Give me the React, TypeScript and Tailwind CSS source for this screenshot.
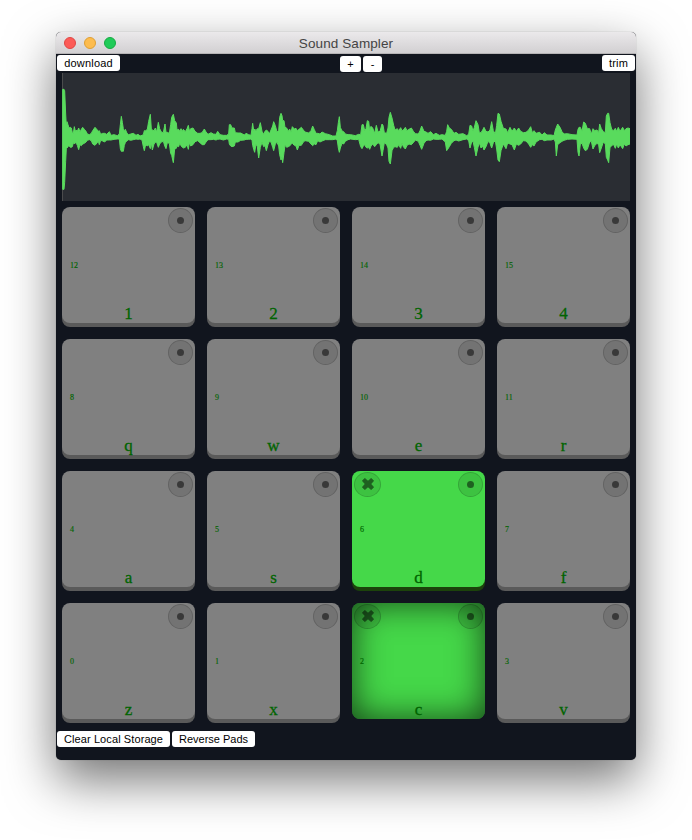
import React from "react";

type Sample = [number, number, number];

// Each sample holds x, peak above the axis and peak below it, in thirds of a pixel.
const SAMPLES: Sample[] = [
  [2,144,156],[6,144,156],[8,140,135],[11,70,72],[13,34,33],[15,47,32],[18,38,28],[21,28,25],[25,30,30],[28,28,30],[31,14,28],[34,12,16],[37,32,20],[40,18,16],[43,22,18],[46,18,24],[50,28,37],[54,16,22],[58,24,25],[62,30,20],[67,24,18],[72,18,14],[76,10,9],[82,8,7],[88,12,10],[92,20,20],[99,30,24],[106,22,16],[109,18,12],[112,20,22],[116,9,9],[122,12,11],[128,12,14],[134,9,8],[142,17,8],[147,6,8],[156,8,6],[166,5,5],[172,10,5],[175,38,34],[178,63,42],[181,45,42],[184,26,42],[187,18,24],[190,24,16],[195,12,10],[200,8,7],[206,10,9],[214,12,7],[222,6,5],[228,9,6],[234,4,5],[240,6,8],[244,8,28],[247,20,40],[251,20,22],[256,24,26],[260,48,22],[265,69,34],[268,25,16],[271,22,38],[276,20,20],[280,28,15],[284,16,15],[289,45,30],[293,26,20],[298,16,14],[304,14,12],[309,40,28],[312,15,34],[316,15,16],[322,12,18],[326,38,48],[329,60,54],[334,69,76],[338,50,35],[343,43,33],[345,22,26],[350,24,28],[353,18,18],[357,26,25],[361,18,30],[364,24,32],[370,17,30],[375,26,22],[379,36,36],[382,20,16],[386,26,26],[393,28,22],[399,18,13],[407,12,10],[414,12,16],[420,14,22],[427,25,22],[432,16,14],[438,9,7],[447,14,7],[454,10,6],[462,9,8],[467,18,6],[474,8,5],[484,6,8],[494,6,5],[500,10,6],[502,38,20],[506,38,26],[510,28,28],[517,28,26],[520,14,14],[528,13,14],[536,13,9],[547,7,8],[552,12,6],[560,8,6],[567,6,5],[570,26,8],[572,42,24],[575,20,36],[578,25,45],[582,20,20],[586,26,28],[590,26,62],[595,44,30],[600,18,15],[605,9,28],[609,18,25],[613,22,40],[618,18,22],[622,10,12],[627,22,14],[632,34,30],[635,47,40],[640,35,20],[645,16,15],[650,20,26],[653,60,52],[657,72,68],[660,65,60],[662,50,76],[666,50,46],[669,30,24],[674,28,30],[679,18,28],[683,25,26],[687,15,20],[691,32,18],[697,25,24],[702,27,26],[706,20,38],[711,24,24],[718,30,24],[724,22,14],[729,16,10],[740,13,12],[747,20,20],[752,34,25],[757,23,20],[762,12,22],[767,12,10],[774,10,14],[780,16,11],[790,11,7],[802,8,7],[812,4,7],[822,4,5],[826,20,10],[829,44,32],[832,62,45],[835,30,32],[840,19,18],[845,17,20],[850,10,12],[858,8,7],[866,8,5],[880,5,7],[890,9,6],[896,8,28],[900,38,34],[904,38,26],[908,20,22],[912,26,30],[916,50,32],[920,48,30],[923,20,36],[927,33,26],[932,28,20],[938,12,28],[943,36,22],[948,16,16],[954,18,20],[960,40,56],[963,36,40],[967,14,16],[974,12,22],[978,28,32],[981,60,72],[985,75,80],[990,58,40],[995,36,30],[999,22,28],[1006,26,30],[1010,20,22],[1016,29,33],[1020,20,18],[1024,22,28],[1030,30,35],[1035,20,24],[1041,24,20],[1048,28,22],[1054,18,16],[1060,11,8],[1069,10,12],[1074,20,24],[1079,34,36],[1086,18,18],[1092,16,10],[1098,12,8],[1106,17,9],[1114,8,5],[1122,12,6],[1132,6,6],[1140,8,5],[1150,6,14],[1154,18,40],[1157,38,36],[1162,28,28],[1168,24,18],[1176,12,10],[1182,15,8],[1190,9,11],[1203,11,7],[1214,5,5],[1220,9,10],[1224,36,32],[1229,34,14],[1233,18,12],[1237,30,30],[1242,50,56],[1248,38,30],[1252,14,16],[1257,14,32],[1262,22,26],[1266,30,38],[1272,18,28],[1278,16,12],[1284,22,18],[1289,47,32],[1294,20,16],[1300,10,10],[1304,36,35],[1308,72,68],[1312,70,73],[1317,48,40],[1324,27,20],[1332,25,34],[1337,14,17],[1344,30,20],[1350,18,22],[1357,28,38],[1363,18,20],[1370,28,24],[1376,18,20],[1384,14,10],[1392,15,11],[1400,22,20],[1406,32,30],[1411,14,22],[1416,20,26],[1422,12,14],[1433,15,7],[1440,7,6],[1447,14,10],[1455,7,8],[1468,7,8],[1476,5,5],[1480,22,14],[1483,30,56],[1487,40,22],[1494,30,16],[1500,17,12],[1506,10,9],[1516,11,6],[1530,8,5],[1545,7,6],[1548,24,45],[1551,30,56],[1555,30,20],[1560,18,18],[1565,46,32],[1570,42,40],[1576,26,36],[1583,26,14],[1588,10,12],[1593,26,35],[1598,20,25],[1605,22,18],[1610,14,22],[1613,40,46],[1618,26,32],[1624,17,14],[1630,14,20],[1633,64,60],[1637,72,68],[1640,72,76],[1644,44,30],[1649,24,26],[1654,20,20],[1660,27,33],[1664,18,20],[1669,30,32],[1674,18,22],[1682,30,34],[1687,20,20],[1692,26,26],[1698,28,22],[1704,26,20],
];

const WAVE =
  SAMPLES.map(([x, up], i) => `${i ? "L" : "M"}${x} ${192 - up}`).join("") +
  [...SAMPLES].reverse().map(([x, , down]) => `L${x} ${192 + down}`).join("") +
  "Z";

type PadState = "empty" | "loaded" | "pressed";
interface PadInfo {
  note: number;
  label: string;
  state: PadState;
}

const ROWS = ["1234", "qwer", "asdf", "zxcv"];
const PADS: PadInfo[] = ROWS.flatMap((row, r) =>
  row.split("").map((label, c) => ({
    note: (3 - r) * 4 + c,
    label,
    state: label === "d" ? "loaded" : label === "c" ? "pressed" : "empty",
  })),
);

const padStyles: Record<PadState, string> = {
  empty: "bg-[#808080] shadow-[0_4px_0_#5a5a5a]",
  loaded: "bg-[#45d849] shadow-[0_4px_0_#1c430b]",
  pressed: "bg-[#45d849] shadow-[inset_0_0_35px_rgba(0,0,0,0.7)]",
};

function Pad({ note, label, state }: PadInfo) {
  return (
    <div className={`flex h-[116px] flex-col rounded-[8px] text-[#006400] ${padStyles[state]}`}>
      <div className="flex h-[26px] shrink-0 justify-between px-[2px] pt-px">
        {state !== "empty" ? (
          <button className="flex h-[25px] w-[27px] items-center justify-center rounded-[50%] border border-black/15 bg-black/10">
            <svg width="12" height="12" viewBox="0 0 12 12" className="-mt-px opacity-50">
              <path d="M2.8.2 6 3 9.2.2 11.8 2.8 9 6 11.8 9.2 9.2 11.8 6 9 2.8 11.8.2 9.2 3 6 .2 2.8Z" fill="black" stroke="black" strokeWidth=".5" />
            </svg>
          </button>
        ) : (
          <span />
        )}
        <button className="flex size-[25px] items-center justify-center rounded-full border border-black/15 bg-black/10">
          <span className="size-[7px] rounded-full bg-black/50" />
        </button>
      </div>
      <div className="flex h-[66px] shrink-0 items-center pl-[8px] text-[8px] leading-none [-webkit-text-stroke:0.15px_#006400]">
        {note}
      </div>
      <div className="shrink-0 pt-[6px] text-center text-[17px] leading-[18px] [-webkit-text-stroke:0.3px_#006400]">
        {label}
      </div>
    </div>
  );
}

function Button({ className, children }: { className: string; children: React.ReactNode }) {
  return (
    <button
      className={`flex h-4 items-center justify-center rounded-[3px] bg-white text-[11px] leading-none whitespace-nowrap text-black ${className}`}
    >
      {children}
    </button>
  );
}

export default function App() {
  return (
    <div className="h-[840px] w-[692px] overflow-hidden bg-white pt-8 pl-14 font-['Liberation_Sans',Arial,sans-serif]">
      <div className="h-[728px] w-[580px] overflow-hidden rounded-[5px] bg-[#11151e] shadow-[0_0_1px_rgba(0,0,0,0.45),0_20px_50px_rgba(0,0,0,0.55)]">
        <header className="grid h-[22px] grid-cols-[1fr_auto_1fr] items-center border-b border-[#b5b3b5] bg-linear-to-b from-[#ebe9eb] to-[#d2d0d2]">
          <div className="flex gap-2 pl-2">
            <span className="size-3 rounded-full border border-[#df4744] bg-[#fc5b57]" />
            <span className="size-3 rounded-full border border-[#de9f34] bg-[#fdbc4e]" />
            <span className="size-3 rounded-full border border-[#17aa42] bg-[#1fcb58]" />
          </div>
          <h1 className="pt-[2px] text-[13.5px] leading-none tracking-[0.1px] text-[#444]">Sound Sampler</h1>
        </header>
        <div className="flex h-[19px] justify-between px-px pt-px">
          <Button className="w-[63px] tracking-[0.2px]">download</Button>
          <div className="flex gap-[2px] pt-px">
            <Button className="w-[21px] pt-px">+</Button>
            <Button className="w-[19px]">-</Button>
          </div>
          <Button className="w-[33px] tracking-[0.2px]">trim</Button>
        </div>
        <div className="mx-[6px] h-[128px] bg-[#2a2d33]">
          <svg width="568" height="128" viewBox="0 0 1704 384">
            <path d="M1.5 0V384" stroke="#4b4c4d" strokeWidth="3" />
            <path d={WAVE} transform="translate(0 1)" fill="#59db5d" stroke="#59db5d" strokeWidth="3" />
          </svg>
        </div>
        <main className="mx-[6px] mt-[6px] grid grid-cols-4 gap-x-3 gap-y-4 font-['Liberation_Serif','Times_New_Roman',serif]">
          {PADS.map((pad) => (
            <Pad key={pad.label} {...pad} />
          ))}
        </main>
        <footer className="flex gap-[2px] pt-3 pl-px">
          <Button className="w-[113px] tracking-[0.1px]">Clear Local Storage</Button>
          <Button className="w-[83px]">Reverse Pads</Button>
        </footer>
      </div>
    </div>
  );
}
